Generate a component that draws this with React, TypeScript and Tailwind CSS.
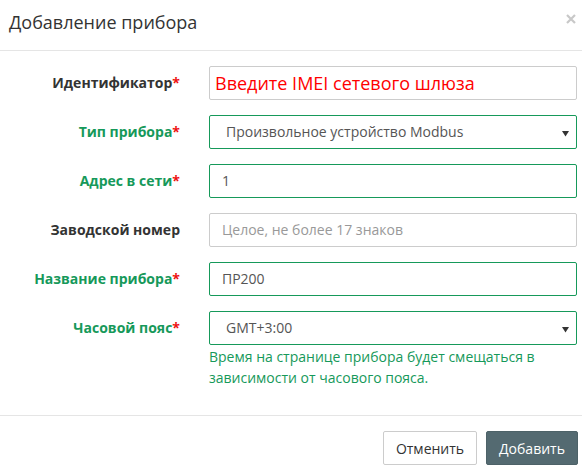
import React from "react";

const GREEN = "text-[#16995a]";

function Label({ text, green, required }: { text: string; green?: boolean; required?: boolean }) {
  return (
    <div
      className={`w-[180px] shrink-0 text-right font-bold text-[14px] leading-[20px] pt-[7px] ${
        green ? GREEN : "text-[#333333]"
      }`}
    >
      {text}
      {required && <span className="text-[#ee1111]">*</span>}
    </div>
  );
}

function Arrow() {
  return (
    <svg width="7" height="6" viewBox="0 0 7 6" className="absolute right-[7px] top-[15px]">
      <path d="M0 0 H7 L3.5 5.5 Z" fill="#333" />
    </svg>
  );
}

export default function App() {
  return (
    <div
      className="w-[582px] h-[476px] bg-white text-[#333333] overflow-hidden"
      style={{ fontFamily: '"Open Sans", "Noto Sans", sans-serif' }}
    >
      {/* Header */}
      <div className="h-[51px] border-b border-[#e5e5e5] flex justify-between">
        <div className="pl-[9px] pt-[9px] text-[18px] leading-[26px] text-[#333333]">Добавление прибора</div>
        <div className="pt-[14px] pr-[6px]">
          <svg width="10" height="10" viewBox="0 0 10 10">
            <path d="M1 1 L9 9 M9 1 L1 9" stroke="#c8c8c8" strokeWidth="2.2" />
          </svg>
        </div>
      </div>

      {/* Body */}
      <div className="h-[364px] pt-[15px] flex flex-col gap-[15px]">
        {/* Identifier */}
        <div className="flex gap-[29px]">
          <Label text="Идентификатор" required />
          <div className="w-[368px] h-[34px] border border-[#cccccc] rounded-[2px] flex items-center pl-[5px] text-[18px] text-[#ff0000] leading-[24px]">
            Введите IMEI сетевого шлюза
          </div>
        </div>

        {/* Type */}
        <div className="flex gap-[29px]">
          <Label text="Тип прибора" green required />
          <div className="relative w-[368px] h-[34px] border border-[#16995a] rounded-[2px] pl-[16px] py-[6px] text-[14px] leading-[20px] text-[#555555]">
            Произвольное устройство Modbus
            <Arrow />
          </div>
        </div>

        {/* Address */}
        <div className="flex gap-[29px]">
          <Label text="Адрес в сети" green required />
          <div className="w-[368px] h-[34px] border border-[#16995a] rounded-[2px] px-[12px] py-[6px] text-[14px] leading-[20px] text-[#555555]">
            1
          </div>
        </div>

        {/* Serial */}
        <div className="flex gap-[29px]">
          <Label text="Заводской номер" />
          <div className="w-[368px] h-[34px] border border-[#cccccc] rounded-[2px] px-[12px] py-[6px] text-[14px] leading-[20px] text-[#999999]">
            Целое, не более 17 знаков
          </div>
        </div>

        {/* Name */}
        <div className="flex gap-[29px]">
          <Label text="Название прибора" green required />
          <div className="w-[368px] h-[34px] border border-[#16995a] rounded-[2px] px-[12px] py-[6px] text-[14px] leading-[20px] text-[#555555]">
            ПР200
          </div>
        </div>

        {/* Timezone */}
        <div className="flex gap-[29px]">
          <Label text="Часовой пояс" green required />
          <div className="w-[368px]">
            <div className="relative h-[34px] border border-[#16995a] rounded-[2px] pl-[16px] py-[6px] text-[14px] leading-[20px] text-[#555555]">
              GMT+3:00
              <Arrow />
            </div>
            <div className={`mt-[1px] text-[14px] leading-[21px] ${GREEN}`}>
              Время на странице прибора будет смещаться в зависимости от часового пояса.
            </div>
          </div>
        </div>
      </div>

      {/* Footer */}
      <div className="border-t border-[#e5e5e5] pt-[15px] pr-[4px] flex justify-end gap-[9px]">
        <button className="w-[94px] h-[34px] border border-[#cccccc] rounded-[2px] bg-white text-[14px] text-[#333333]">
          Отменить
        </button>
        <button className="w-[92px] h-[34px] border border-[#4d6268] rounded-[2px] bg-[#546a71] text-[14px] text-white">
          Добавить
        </button>
      </div>
    </div>
  );
}
